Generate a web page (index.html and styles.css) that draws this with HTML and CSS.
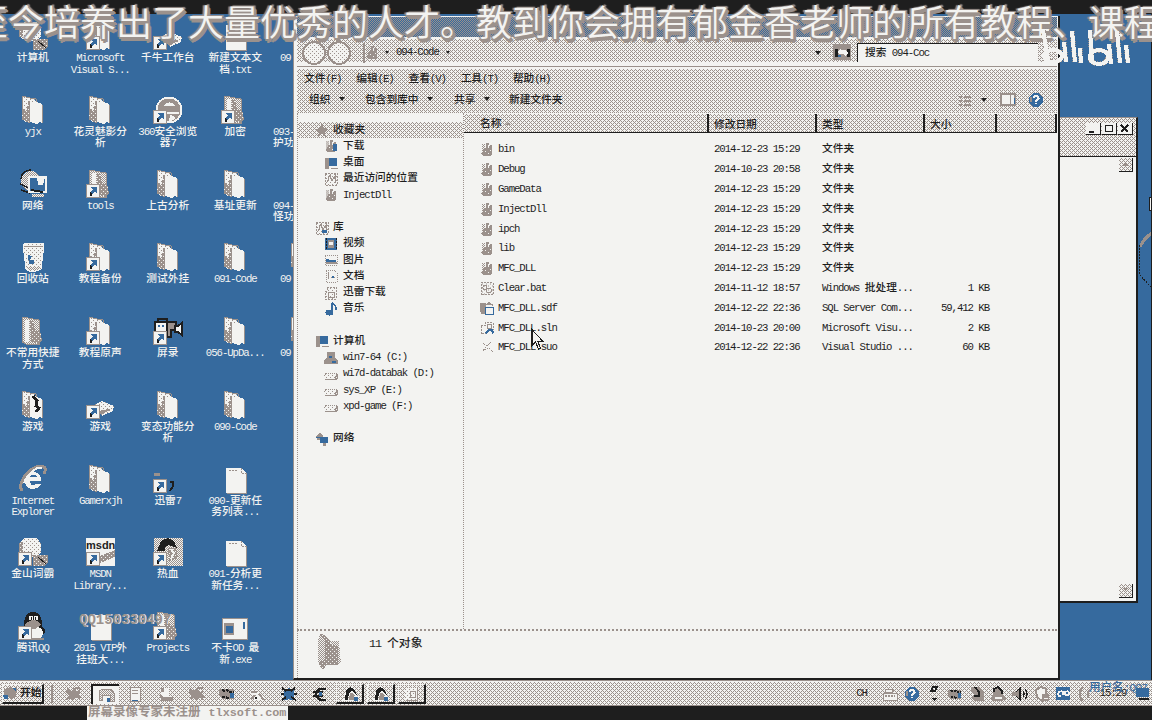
FILE: index.html
```html
<!DOCTYPE html>
<html lang="zh-CN">
<head>
<meta charset="utf-8">
<title>094-Code</title>
<link rel="stylesheet" href="styles.css">
</head>
<body>
<svg class="defs" aria-hidden="true">
<defs>
<pattern id="d" width="2" height="2" patternUnits="userSpaceOnUse"><rect width="2" height="2" fill="#f3f3f1"/><path d="M0 0h1v1H0zM1 1h1v1H1z" fill="#9b918c"/></pattern>
<pattern id="p" width="4" height="4" patternUnits="userSpaceOnUse"><rect width="4" height="4" fill="#f3f3f1"/><path d="M0 0h1v1H0zM2 2h1v1H2z" fill="#9b918c"/></pattern>
<pattern id="g" width="4" height="4" patternUnits="userSpaceOnUse"><rect width="4" height="4" fill="#9b918c"/><path d="M0 0h1v1H0zM2 2h1v1H2z" fill="#f3f3f1"/></pattern>
</defs>
<symbol id="arrow" viewBox="0 0 14 14"><path d="M.5.5h13v13H.5z" fill="#f3f3f1" stroke="#9b918c"/><path d="M5 3h6v6l-2-1-3 2v2H4V8l3-3-2-1z" fill="#366a9e"/><path d="M4 8v4h2V9z" fill="#1e1e1e"/></symbol>
<symbol id="folder" viewBox="0 0 30 30"><path d="M4 1l8 2h5v3l7 3v18H8l-4-3z" fill="url(#p)"/><path d="M4 25V1l8 2 6 1v3" fill="none" stroke="#9b918c"/><path d="M5 14l3 3 3-12 2 3v19l-2 1-7-4z" fill="url(#g)"/><path d="M12 7l9 1 3 3v17l-3-1-2 2-7-2z" fill="#f3f3f1"/><path d="M24 10v18" stroke="#9b918c"/></symbol>
<symbol id="folder2" viewBox="0 0 30 30"><path d="M4 1l17 3v24H8l-4-2z" fill="url(#d)" stroke="#9b918c"/><path d="M7 4h4v22H7z" fill="#f3f3f1"/><path d="M12 5h3l2 10h5l2 9-3 4-8-3z" fill="url(#g)"/></symbol>
<symbol id="doc" viewBox="0 0 30 30"><path d="M6 4h15l5 5v20H6z" fill="#f3f3f1"/><path d="M21 4v5h5v20M9 6h9" fill="none" stroke="#9b918c" stroke-dasharray="2 1"/><path d="M26 9v20H7" fill="none" stroke="#9b918c"/></symbol>
<symbol id="net" viewBox="0 0 30 30"><circle cx="13" cy="12" r="10" fill="url(#d)"/><path d="M3 10c0-5 4-9 10-9M2 15l9 4M3 21l9 3" stroke="#1e1e1e" stroke-width="1.5" fill="none"/><path d="M11 8h17v15H11z" fill="#366a9e" stroke="#f3f3f1" stroke-width="2"/><path d="M19 8h8l-2 8h-5z" fill="#f3f3f1"/><path d="M13 21l12 2" stroke="#1e1e1e" stroke-width="2"/><path d="M14 25h12v3H14z" fill="url(#d)"/></symbol>
<symbol id="bin" viewBox="0 0 30 30"><path d="M5 3l3-2h17l1 2-3 24-5 2h-7l-3-2z" fill="url(#p)" stroke="#f3f3f1"/><path d="M6 4h19" stroke="#9b918c"/><path d="M10 13l4 1-2 4h4v4h-5z" fill="#366a9e"/><path d="M9 25h13l-2 3h-9z" fill="url(#d)"/></symbol>
<symbol id="globe" viewBox="0 0 30 30"><circle cx="16" cy="15" r="12.5" fill="#9b918c" stroke="#f3f3f1" stroke-width="2"/><path d="M10 11c4-5 9-5 13 0zM5 17h21v2H5zM17 20c3 0 7 3 4 5l-5 1z" fill="#f3f3f1"/></symbol>
<symbol id="ie" viewBox="0 0 30 30"><path d="M8 17h15c2-12-17-12-16 1 1 9 12 9 16 2h-5c-3 3-6 1-6-3M12 13c1-3 6-3 7 0z" fill="#f3f3f1" fill-rule="evenodd"/><path d="M4 27C-2 18 15-2 26 3c2 1 1 5 0 7" fill="none" stroke="#9b918c" stroke-width="3"/><path d="M6 19C9 10 19 2 24 4" fill="none" stroke="#f3f3f1" stroke-width="2"/></symbol>
<symbol id="camera" viewBox="0 0 30 30"><path d="M5 6V3h9v3" fill="none" stroke="#1e1e1e" stroke-width="2"/><path d="M13 6h10v8h-5v7h-5z" fill="#9b918c" stroke="#1e1e1e" stroke-width="2"/><path d="M22 10h3l4-3v12l-4-3h-3z" fill="#f3f3f1" stroke="#1e1e1e" stroke-width="2"/><path d="M2 6h12v14H2z" fill="#f3f3f1" stroke="#1e1e1e" stroke-width="1.5"/><path d="M5 9h2v2H5zM9 9h2v2H9z" fill="#366a9e"/></symbol>
<symbol id="penguin" viewBox="0 0 30 30"><ellipse cx="15" cy="20" rx="12" ry="7" fill="#1e1e1e"/><ellipse cx="15" cy="12" rx="9" ry="11" fill="#1e1e1e"/><ellipse cx="16" cy="22" rx="9" ry="7" fill="#f3f3f1"/><path d="M10 11q5-4 11 0l2 3-6 4H11l-5-4z" fill="#9b918c"/><circle cx="13" cy="7" r="2.5" fill="#f3f3f1"/><circle cx="18" cy="7" r="2.5" fill="#f3f3f1"/><path d="M13 6v3m4-3v3" stroke="#1e1e1e"/><path d="M7 27h19v2H7z" fill="#9b918c"/></symbol>
<symbol id="user" viewBox="0 0 20 18"><path d="M3 16l3-10 4-4 4 1 3 7v6z" fill="url(#p)"/><path d="M5 15l1-9q3-6 8-2l3 6-5-4-3 2-1 7z" fill="#1e1e1e"/><path d="M10 8l4 1 1 6H9z" fill="#9b918c"/><path d="M14 12h4v4h-4z" fill="#366a9e"/></symbol>
<symbol id="ball" viewBox="0 0 30 30"><path d="M6 1h13l4 6v9l-5 4H8l-7-5 1-9z" fill="url(#p)"/><path d="M1 6l4-2v10l-2 2H1z" fill="url(#g)"/><path d="M15 18h15v8l-4 3H15z" fill="url(#g)"/><path d="M20 20l8 7" stroke="#1e1e1e"/></symbol>
<symbol id="hot" viewBox="0 0 30 30"><path d="M1 1h29v28H1z" fill="url(#d)"/><path d="M4 14L8 4l7-3 6 3 3 7-8-3-4 2v4z" fill="#1e1e1e"/><path d="M15 11h8l2 10-9 3z" fill="url(#g)"/><path d="M18 12l3 4-3 6" stroke="#f3f3f1" fill="none" stroke-width="2"/></symbol>
<symbol id="exe" viewBox="0 0 30 30"><path d="M2 7h25v21H2z" fill="#f3f3f1" stroke="#9b918c"/><path d="M4 12h10v12H4z" fill="#9b918c"/><path d="M6 15h7v7H6z" fill="#366a9e"/><path d="M24 11v7" stroke="#366a9e" stroke-width="2"/></symbol>
<symbol id="hat" viewBox="0 0 30 30"><path d="M9 15l8-4 12 5-1 5-11 5z" fill="url(#p)"/><path d="M14 21l14-3-12 7z" fill="#9b918c"/></symbol>
<symbol id="sf" viewBox="0 0 14 15"><path d="M2 2h3v11H2z" fill="url(#d)"/><path d="M4 6h2V1h3v5l1-3h2v10l-3 1H3l-2-2 2-3z" fill="#9b918c"/><path d="M8 3h1v3H8zM5 9h1v1H5zM8 11h1v1H8zM10 8h1v1h-1z" fill="#f3f3f1"/></symbol>
<symbol id="lines" viewBox="0 0 14 14"><path d="M1 1h12v12H1z" fill="url(#p)" stroke="#9b918c" stroke-dasharray="2 1"/><path d="M3 10l3-7 2 6 3-5v7" fill="none" stroke="#9b918c"/></symbol>
<symbol id="pc" viewBox="0 0 14 14"><path d="M3 2h10v8H3z" fill="#366a9e"/><path d="M1 2h3v10H1zM7 12h7" fill="#9b918c" stroke="#9b918c"/></symbol>
<symbol id="video" viewBox="0 0 14 14"><path d="M1 1h12v12H1z" fill="#366a9e"/><path d="M4 3h6v8H4z" fill="#9b918c"/><path d="M2 1v12M12 1v12" stroke="#1e1e1e" stroke-dasharray="2 1"/><path d="M5 5h4v3H5z" fill="#f3f3f1"/></symbol>
<symbol id="pic" viewBox="0 0 14 14"><path d="M1 2h12v10H1z" fill="#f3f3f1" stroke="#9b918c" stroke-dasharray="1 1"/><path d="M2 6l5 1h5v4H2z" fill="#366a9e"/><path d="M2 10h11" stroke="#9b918c" stroke-width="2"/></symbol>
<symbol id="note" viewBox="0 0 14 14"><path d="M8 1v9M8 1q5 3 4 7" fill="none" stroke="#366a9e" stroke-width="1.5"/><ellipse cx="5.5" cy="10.5" rx="4" ry="3" fill="#366a9e"/></symbol>
<symbol id="drive" viewBox="0 0 14 14"><path d="M0 9l2-3h9l3 2v3l-2 2H1l-1-1z" fill="url(#p)"/><path d="M0 9l2-3h9l3 2" stroke="#9b918c" fill="none" stroke-dasharray="1 1"/><path d="M1 12.5h10l3-2V8l-3 2" stroke="#9b918c" stroke-width="1.5" fill="none"/></symbol>
<symbol id="cdrive" viewBox="0 0 14 14"><path d="M3 1h8v6l3 2v4H0V9l3-2z" fill="#9b918c"/><path d="M5 5h3v2H5zM8 10h4v2H8z" fill="#366a9e"/></symbol>
<symbol id="star" viewBox="0 0 14 14"><path d="M7 0l2 5 5 1-4 3 1 5-4-3-4 3 1-5-4-3 5-1z" fill="#9b918c"/></symbol>
<symbol id="chip" viewBox="0 0 20 16"><path d="M2 3h15v10H5l-3-3z" fill="#9b918c"/><path d="M5 4l3 1 2-1 3 2h4M5 11h4l3 2" stroke="#1e1e1e" stroke-width="2" fill="none" stroke-dasharray="3 1"/><path d="M13 7h4v5h-4z" fill="#366a9e"/></symbol>
<symbol id="bug" viewBox="0 0 20 18"><path d="M3 3l5 3 2-4 3 5 4-3-2 6 3 3-6-1-3 4-2-3-5 2 3-5-3-2z" fill="#9b918c"/><path d="M11 3h5M12 11l4 3" stroke="#9b918c" stroke-width="2"/></symbol>
<symbol id="q" viewBox="0 0 16 16"><path d="M5 0h6l5 5v6l-5 5H5l-5-5V5z" fill="#366a9e"/><path d="M5 6q0-3 3-3t3 3l-3 3v1m0 1v2" stroke="#f3f3f1" stroke-width="2" fill="none"/><path d="M2 5v5" stroke="#9b918c" stroke-width="2"/></symbol>
</svg>

<main class="desktop">
<section class="icons">
<div class="ic"><svg><use href="#ball"/></svg><span>计算机</span></div>
<div class="ic"><svg><use href="#folder"/></svg><svg class="sc"><use href="#arrow"/></svg><span>Microsoft<br>Visual S...</span></div>
<div class="ic"><svg><use href="#hat"/></svg><svg class="sc"><use href="#arrow"/></svg><span>千牛工作台</span></div>
<div class="ic"><svg><use href="#doc"/></svg><span>新建文本文<br>档.txt</span></div>
<div class="ic cut"><i></i><span class="in">09</span></div>

<div class="ic"><svg><use href="#folder"/></svg><span>yjx</span></div>
<div class="ic"><svg><use href="#folder"/></svg><span>花灵魅影分<br>析</span></div>
<div class="ic"><svg><use href="#globe"/></svg><svg class="sc"><use href="#arrow"/></svg><span>360安全浏览<br>器7</span></div>
<div class="ic"><svg><use href="#folder2"/></svg><svg class="sc"><use href="#arrow"/></svg><span>加密</span></div>
<div class="ic cut"><i></i><span>093-<br>护功</span></div>

<div class="ic"><svg><use href="#net"/></svg><span>网络</span></div>
<div class="ic"><svg><use href="#folder2"/></svg><svg class="sc"><use href="#arrow"/></svg><span>tools</span></div>
<div class="ic"><svg><use href="#folder"/></svg><span>上古分析</span></div>
<div class="ic"><svg><use href="#folder"/></svg><span>基址更新</span></div>
<div class="ic cut"><i></i><span>094-<br>怪功</span></div>

<div class="ic"><svg><use href="#bin"/></svg><span>回收站</span></div>
<div class="ic"><svg><use href="#folder"/></svg><svg class="sc"><use href="#arrow"/></svg><span>教程备份</span></div>
<div class="ic"><svg><use href="#folder"/></svg><span>测试外挂</span></div>
<div class="ic"><svg><use href="#folder"/></svg><span>091-Code</span></div>
<div class="ic cut"><svg><use href="#folder"/></svg><span class="in">09</span></div>

<div class="ic"><svg><use href="#folder2"/></svg><span>不常用快捷<br>方式</span></div>
<div class="ic"><svg><use href="#folder"/></svg><svg class="sc"><use href="#arrow"/></svg><span>教程原声</span></div>
<div class="ic"><svg><use href="#camera"/></svg><svg class="sc"><use href="#arrow"/></svg><span>屏录</span></div>
<div class="ic"><svg><use href="#folder"/></svg><span>056-UpDa...</span></div>
<div class="ic cut"><svg><use href="#folder"/></svg><span class="in">09</span></div>

<div class="ic"><svg><use href="#folder"/><path d="M15 6l4 5-1 5 3 2-3 4" fill="none" stroke="#1e1e1e" stroke-width="3"/></svg><span>游戏</span></div>
<div class="ic"><svg><use href="#hat"/></svg><svg class="sc"><use href="#arrow"/></svg><span>游戏</span></div>
<div class="ic"><svg><use href="#folder"/></svg><span>变态功能分<br>析</span></div>
<div class="ic"><svg><use href="#folder"/></svg><span>090-Code</span></div>
<div class="ic"></div>

<div class="ic"><svg><use href="#ie"/></svg><span>Internet<br>Explorer</span></div>
<div class="ic"><svg><use href="#folder"/></svg><span>Gamerxjh</span></div>
<div class="ic"><svg><path d="M1 10h6" stroke="#9b918c" stroke-width="3"/><path d="M17 18h3v4l-3 5" fill="none" stroke="#1e1e1e" stroke-width="2"/></svg><svg class="sc"><use href="#arrow"/></svg><span>迅雷7</span></div>
<div class="ic"><svg><use href="#doc"/></svg><span>090-更新任<br>务列表...</span></div>
<div class="ic"></div>

<div class="ic"><svg><use href="#ball"/></svg><svg class="sc"><use href="#arrow"/></svg><span>金山词霸</span></div>
<div class="ic"><svg><path d="M1 1h29v28H1z" fill="#f3f3f1"/><path d="M15 19l15-6v7l-15 6z" fill="url(#g)"/><text x="1" y="12" class="msdn">msdn</text></svg><svg class="sc"><use href="#arrow"/></svg><span>MSDN<br>Library...</span></div>
<div class="ic"><svg><use href="#hot"/></svg><svg class="sc"><use href="#arrow"/></svg><span>热血</span></div>
<div class="ic"><svg><use href="#doc"/></svg><span>091-分析更<br>新任务...</span></div>
<div class="ic"></div>

<div class="ic"><svg><use href="#penguin"/></svg><svg class="sc"><use href="#arrow"/></svg><span>腾讯QQ</span></div>
<div class="ic"><svg><use href="#doc"/></svg><span>2015 VIP外<br>挂班大...</span></div>
<div class="ic"><svg><use href="#folder2"/></svg><svg class="sc"><use href="#arrow"/></svg><span>Projects</span></div>
<div class="ic"><svg><use href="#exe"/></svg><span>不卡OD 最<br>新.exe</span></div>
<div class="ic"></div>
</section>

<svg class="gadget" viewBox="0 0 14 110"><path d="M14 35Q5 42 2 56T14 92" fill="#366a9e"/><path d="M14 38Q6 43 2 52" fill="none" stroke="#9b918c" stroke-width="3"/><path d="M1 50v29l12 13" fill="none" stroke="#1e1e1e" stroke-dasharray="2 1"/><path d="M11 2h5v13h-5z" fill="#f3f3f1" stroke="#1e1e1e"/></svg>

<section class="backwin">
<header><b><svg viewBox="0 0 14 12"><path d="M3 9h5" stroke="#1e1e1e" stroke-width="2"/></svg></b><b><svg viewBox="0 0 14 12"><path d="M3.5 2.5h7v6h-7z" fill="none" stroke="#1e1e1e" stroke-width="1.5"/></svg></b><b><svg viewBox="0 0 14 12"><path d="M3 2l7 7M10 2L3 9" stroke="#1e1e1e" stroke-width="1.5"/></svg></b></header>
<div class="backbody"><b><svg viewBox="0 0 14 14"><path d="M3 9l4-4 4 4z" fill="#9b918c"/></svg></b><b><svg viewBox="0 0 14 14"><path d="M3 4l4 4 4-4z" fill="#9b918c"/></svg></b></div>
</section>

<section class="explorer">
<div class="title"></div>
<div class="addr">
<svg class="nav" viewBox="0 0 54 27"><circle cx="14" cy="14" r="11" fill="url(#p)" stroke="#9b918c" stroke-width="2"/><circle cx="39" cy="14" r="11" fill="url(#p)" stroke="#9b918c" stroke-width="2"/></svg>
<div class="path"><svg class="s14"><use href="#sf"/></svg><i class="tri"></i><span>094-Code</span><i class="tri"></i><i class="tri end"></i></div>
<svg class="go" viewBox="0 0 18 17"><path d="M0 0h18v16H0z" fill="#9b918c"/><path d="M2 5h3v8H2zM14 5h3v8h-3z" fill="#1e1e1e"/><path d="M5 7l3-3v2h4l3 3-3 3-2-2H6z" fill="#f3f3f1"/><path d="M5 11h3v2H5z" fill="#366a9e"/></svg>
<div class="search">搜索 094-Coc</div>
</div>
<nav class="menu"><span>文件(F)</span><span>编辑(E)</span><span>查看(V)</span><span>工具(T)</span><span>帮助(H)</span></nav>
<div class="tools"><span class="t1">组织<i class="tri"></i></span><span class="t2">包含到库中<i class="tri"></i></span><span class="t3">共享<i class="tri"></i></span><span>新建文件夹</span>
<div class="right"><svg class="s14" viewBox="0 0 14 14"><path d="M1 3h3m2 0h7M1 7h3m2 0h7M1 11h3m2 0h7" stroke="#9b918c" stroke-width="2"/></svg><i class="tri"></i><svg class="pane" viewBox="0 0 16 14"><path d="M1 1h14v11H1z" fill="#f3f3f1" stroke="#9b918c" stroke-width="1.5"/><path d="M10 2v10" stroke="#9b918c"/><path d="M14 5v6" stroke="#366a9e"/></svg><svg class="s14"><use href="#q" width="14" height="14"/></svg></div></div>
<div class="body">
<aside>
<div class="h fav"><svg><use href="#star"/></svg>收藏夹</div>
<div><svg><use href="#sf"/><path d="M9 5h4v7H9z" fill="#366a9e"/></svg>下载</div>
<div><svg><use href="#pc"/></svg>桌面</div>
<div><svg><use href="#lines"/></svg>最近访问的位置</div>
<div><svg><use href="#sf"/></svg>InjectDll</div>
<div></div>
<div class="h"><svg><use href="#lines"/><path d="M7 10h5" stroke="#366a9e" stroke-width="3"/></svg>库</div>
<div><svg><use href="#video"/></svg>视频</div>
<div><svg><use href="#pic"/></svg>图片</div>
<div><svg viewBox="0 0 14 14"><path d="M2 1h8l3 3v9H2z" fill="#f3f3f1" stroke="#9b918c" stroke-dasharray="1 1"/><path d="M4 3v7M7 8h4" stroke="#9b918c"/><path d="M8 7h2v2H8z" fill="#366a9e"/></svg>文档</div>
<div><svg viewBox="0 0 14 14"><path d="M1 5h2V1h9v12H1z" fill="url(#p)" stroke="#9b918c" stroke-dasharray="2 1"/><path d="M4 6h6v5H4z" fill="none" stroke="#9b918c"/></svg>迅雷下载</div>
<div><svg><use href="#note"/></svg>音乐</div>
<div></div>
<div class="h"><svg><use href="#pc"/></svg>计算机</div>
<div><svg><use href="#cdrive"/></svg>win7-64 (C:)</div>
<div><svg><use href="#drive"/></svg>wi7d-databak (D:)</div>
<div><svg><use href="#drive"/></svg>sys_XP (E:)</div>
<div><svg><use href="#drive"/></svg>xpd-game (F:)</div>
<div></div>
<div class="h"><svg viewBox="0 0 14 14"><path d="M1 4l4-3 3 3-2 4H2z" fill="#9b918c"/><path d="M5 5h8v6H5z" fill="#366a9e"/><path d="M9 11v3" stroke="#9b918c" stroke-width="3"/><path d="M1 5h4v2" stroke="#366a9e" fill="none"/></svg>网络</div>
</aside>
<div class="list">
<div class="row head"><span>名称 <i class="up"></i></span><span>修改日期</span><span>类型</span><span>大小</span><span></span></div>
<div class="rows">
<div class="row"><span><svg><use href="#sf"/></svg>bin</span><span>2014-12-23 15:29</span><span>文件夹</span><span></span></div>
<div class="row"><span><svg><use href="#sf"/></svg>Debug</span><span>2014-10-23 20:58</span><span>文件夹</span><span></span></div>
<div class="row"><span><svg><use href="#sf"/></svg>GameData</span><span>2014-12-23 15:29</span><span>文件夹</span><span></span></div>
<div class="row"><span><svg><use href="#sf"/></svg>InjectDll</span><span>2014-12-23 15:29</span><span>文件夹</span><span></span></div>
<div class="row"><span><svg><use href="#sf"/></svg>ipch</span><span>2014-12-23 15:29</span><span>文件夹</span><span></span></div>
<div class="row"><span><svg><use href="#sf"/></svg>lib</span><span>2014-12-23 15:29</span><span>文件夹</span><span></span></div>
<div class="row"><span><svg><use href="#sf"/></svg>MFC_DLL</span><span>2014-12-23 15:29</span><span>文件夹</span><span></span></div>
<div class="row"><span><svg viewBox="0 0 14 14"><path d="M1 1h12v12H1z" fill="url(#p)" stroke="#9b918c" stroke-dasharray="2 1"/><circle cx="5" cy="6" r="2" fill="none" stroke="#9b918c"/><circle cx="9" cy="9" r="2.5" fill="none" stroke="#9b918c"/></svg>Clear.bat</span><span>2014-11-12 18:57</span><span>Windows 批处理...</span><span>1 KB</span></div>
<div class="row"><span><svg viewBox="0 0 14 14"><path d="M0 2h5v10H2L0 9zM6 3l3-2 4 3" fill="#9b918c" stroke="#9b918c"/><path d="M5.5 5.5h8v7h-8z" fill="#f3f3f1" stroke="#366a9e"/></svg>MFC_DLL.sdf</span><span>2014-12-22 22:36</span><span>SQL Server Com...</span><span>59,412 KB</span></div>
<div class="row"><span><svg viewBox="0 0 14 14"><path d="M1 4h4V1h8v7M1 4v8h6" fill="none" stroke="#9b918c" stroke-dasharray="2 1"/><path d="M7 3h4v4H7z" fill="none" stroke="#9b918c"/><path d="M6 12l3-4h3l1 4" fill="none" stroke="#366a9e" stroke-width="2"/></svg>MFC_DLL.sln</span><span>2014-10-23 20:00</span><span>Microsoft Visu...</span><span>2 KB</span></div>
<div class="row"><span><svg viewBox="0 0 14 14"><path d="M3 3l4 2-4 5 6-3 4 5M8 4l3-2" fill="none" stroke="#9b918c" stroke-dasharray="2 1"/></svg>MFC_DLL.suo</span><span>2014-12-22 22:36</span><span>Visual Studio ...</span><span>60 KB</span></div>
</div>
</div>
</div>
<footer><svg viewBox="0 0 26 38"><path d="M4 1l6 2 5 5h8l2 22-3 2H10l-2 5-6-8V7z" fill="url(#d)"/><path d="M4 1l5 1 7 10 6 2v18H10l-3 5-5-7 7-3V7z" fill="url(#g)"/></svg><span>11 个对象</span></footer>
</section>

<svg class="cursor" viewBox="0 0 14 24"><path d="M1.5 1v17l4-4 3 7 2-1-3-7h5z" fill="#f3f3f1" stroke="#1e1e1e"/><path d="M1.5 1v17" stroke="#1e1e1e" stroke-width="2"/></svg>
<div class="qqmark">QQ150330497</div>
</main>

<footer class="taskbar">
<button class="start"><svg viewBox="0 0 16 16"><path d="M1 4l6-2 2 2 5-2-1 10-5 2-3-2-4 2z" fill="#9b918c"/><path d="M0 10h5v4H1zM9 3h4v3" fill="#366a9e"/></svg>开始</button>
<i class="sep"></i>
<div class="tasks">
<b><svg><use href="#bug"/></svg></b>
<b class="press"><svg viewBox="0 0 20 18"><path d="M3 5l4-2h8l3 4v8h-4V9H6v5H3z" fill="url(#d)" stroke="#9b918c"/><path d="M11 12h3v4h-3z" fill="#366a9e"/></svg></b>
<b><svg viewBox="0 0 20 18"><path d="M5 2h10v14H5z" fill="#f3f3f1" stroke="#9b918c"/><path d="M7 5h6M7 8h6" stroke="#9b918c"/><path d="M7 15h6" stroke="#366a9e"/></svg></b>
<b><svg viewBox="0 0 20 18"><path d="M5 3h8v9H5z" fill="#f3f3f1"/><path d="M4 9l3 3h10v4H5zM5 3h3v4H5z" fill="#9b918c"/></svg></b>
<b><svg><use href="#bug"/></svg></b>
<b><svg><use href="#chip"/></svg></b>
<b><svg viewBox="0 0 20 18"><path d="M2 6h7l3 5h4v4H7z" fill="#f3f3f1"/><path d="M3 7h6M4 14l3-4M11 9l5 6" stroke="#9b918c" stroke-width="2"/><path d="M7 12h2v2H7z" fill="#1e1e1e"/></svg></b>
<b><svg viewBox="0 0 20 18"><path d="M5 4h3l2-1 2 1h3v3l1 2-1 2v4h-3l-2-1-3 1H5v-4L4 9l1-2z" fill="#366a9e"/><path d="M3 3l4 3M16 3l-4 3M3 15l4-3M17 15l-5-3M2 9h3M15 9h3M7 5h5" stroke="#1e1e1e" stroke-width="2"/></svg></b>
<b><svg viewBox="0 0 20 18"><path d="M16 4h-5q-5 1-5 5t5 6h5M3 7h10M3 11h10" fill="none" stroke="#1e1e1e" stroke-width="2.5"/><path d="M9 7h3v4H9z" fill="#366a9e"/></svg></b>
<b class="raise"><svg><use href="#user"/></svg></b>
<b class="raise"><svg><use href="#user"/></svg></b>
<b class="raise"><svg viewBox="0 0 20 18"><path d="M4 3h13v12H4z" fill="url(#p)"/><path d="M16 3v12H5M9 6h5v6H9z" fill="none" stroke="#9b918c"/></svg></b>
</div>
<div class="tray">
<span class="ch">CH</span>
<svg viewBox="0 0 18 18"><path d="M5 4h8l-2 3H4zM2 8h14v7H2z" fill="#f3f3f1" stroke="#9b918c"/><path d="M4 11h10" stroke="#9b918c" stroke-width="2" stroke-dasharray="2 1"/></svg>
<svg><use href="#q" x="2" y="2" width="14" height="14"/></svg>
<svg viewBox="0 0 18 18"><path d="M8 2h4l-2 4H6z" fill="none" stroke="#1e1e1e" stroke-width="1.5"/><path d="M6 13h6l-3 3z" fill="#1e1e1e"/></svg>
<svg><use href="#chip" width="18" height="18"/></svg>
<svg viewBox="0 0 18 18"><path d="M4 2h7l5 5v9H7l-5-4 6-2-6-4z" fill="#9b918c"/><path d="M7 2l4 5v4H6" stroke="#1e1e1e" stroke-width="2" fill="none"/></svg>
<svg viewBox="0 0 18 18"><path d="M4 9V5l4-3h3l3 4v5l3 3-4 2H4l-2-3z" fill="#9b918c"/><path d="M5 7V4l4-2 4 4v3" stroke="#1e1e1e" stroke-width="2" fill="none"/><path d="M6 12h7v2H6z" fill="#f3f3f1"/></svg>
<svg viewBox="0 0 18 18"><path d="M1 7h4l5-5v14l-5-5H1z" fill="#9b918c"/><path d="M5 7l4-4v12l-4-4M12 6q2 3 0 6M14 4q4 5 0 10" stroke="#1e1e1e" stroke-width="1.2" fill="none"/></svg>
<svg viewBox="0 0 18 18"><path d="M3 5l5-3 5 2v8l-4 4-5-4z" fill="#f3f3f1" stroke="#9b918c" stroke-width="2"/><path d="M9 9h7v7H9z" fill="#9b918c"/><path d="M11 13h4" stroke="#f3f3f1"/></svg>
<svg viewBox="0 0 18 18"><path d="M2 2h14v13H2z" fill="#366a9e"/><path d="M7 11H5q-2-2 0-4 3-2 5 1l2 2q3 1 3-2-1-3-4-1l-3 3" stroke="#f3f3f1" stroke-width="1.6" fill="none"/></svg>
<svg viewBox="0 0 18 18"><path d="M7 2q-7 7 0 14M13 5q-3 4 0 8" stroke="#9b918c" stroke-width="2" fill="none"/></svg>
<span class="time">15:29</span>
<svg viewBox="0 0 18 18"><path d="M4 3h13v9H4z" fill="#366a9e"/><path d="M7 14h10" stroke="#1e1e1e" stroke-width="2"/></svg>
</div>
<div class="user">用户名:QQ7</div>
</footer>

<div class="bottom"><span>屏幕录像专家未注册<em>tlxsoft.com</em></span></div>
<div class="marquee">至今培养出了大量优秀的人才。教到你会拥有郁金香老师的所有教程、课程</div>
<svg class="bili" viewBox="0 0 92 46"><defs><g id="bl" fill="none"><path d="M3 6l5 30"/><ellipse cx="13" cy="32" rx="9" ry="6"/><path d="M24 18l2 20M32 7l3 31M40 24l1 15M50 6l2 33"/><ellipse cx="59" cy="33" rx="9" ry="7"/><path d="M69 20l2 20M77 7l3 32M86 21l2 18"/></g></defs><use href="#bl" stroke="#9b918c" stroke-width="5" stroke-dasharray="1 1"/><use href="#bl" stroke="#f3f3f1" stroke-width="4"/></svg>
<script src="text.js"></script>
</body>
</html>
```
FILE: styles.css
```css
:root {
  --ink: #1e1e1e;
  --light: #f3f3f1;
  --gray: #9b918c;
  --blue: #366a9e;
  --dither: #f3f3f1 url("data:image/svg+xml,%3Csvg xmlns='http://www.w3.org/2000/svg' width='4' height='4' shape-rendering='crispEdges'%3E%3Cpath d='M2 0h1v1h-1zM1 1h1v1h-1zM3 1h1v1h-1zM0 2h1v1h-1zM1 3h1v1h-1zM3 3h1v1h-1z' fill='%239b918c'/%3E%3C/svg%3E") 0 0 / 4px 4px;
  --caption: #366a9e url("data:image/svg+xml,%3Csvg xmlns='http://www.w3.org/2000/svg' width='2' height='2' shape-rendering='crispEdges'%3E%3Cpath d='M0 0h1v1h-1zM1 1h1v1h-1z' fill='%239b918c'/%3E%3C/svg%3E") 0 0 / 2px 2px;
}
* { box-sizing: border-box; }
body {
  margin: 0; width: 1152px; height: 720px; overflow: hidden; position: relative;
  display: flex; flex-direction: column;
  background: var(--ink); color: var(--ink);
  font: 500 10.7px/11px "Liberation Mono", "Noto Sans CJK SC", monospace;
  white-space: nowrap;
}
.lat { letter-spacing: -1.07px; white-space: pre; }
svg { display: block; flex: none; shape-rendering: crispEdges; }
.defs { position: absolute; width: 0; height: 0; }
i { font-style: normal; }

.desktop { height: 666px; margin-top: 14px; flex: none; position: relative; background: var(--blue); overflow: hidden; border-right: 1px solid var(--ink); }
.icons { display: grid; grid-template-columns: repeat(5, 67.5px); grid-auto-rows: 73.75px; margin-left: -1px; padding-top: 7px; color: var(--light); }
.ic { display: flex; flex-direction: column; align-items: center; position: relative; text-align: center; }
.ic svg { width: 30px; height: 30px; }
.ic i { height: 30px; }
.ic > span { margin-top: 2px; line-height: 11.5px; }
.ic .sc { position: absolute; left: 19px; top: 15px; width: 14px; height: 14px; }
.ic.cut { align-items: flex-start; text-align: left; padding-left: 4px; }
.ic.cut svg { margin-left: 14px; }
.ic.cut .in { padding-left: 7px; }
.msdn { font: bold 11px "Liberation Sans", sans-serif; fill: var(--ink); }

.gadget { position: absolute; left: 1138px; top: 181px; width: 14px; height: 110px; }
.backwin { position: absolute; left: 1050px; top: 103px; width: 88px; height: 486px; display: flex; flex-direction: column; background: var(--light); border: 1px solid var(--gray); border-right: 2px solid var(--ink); border-bottom: 2px solid var(--ink); }
.backwin header { height: 39px; background: var(--dither); border-bottom: 1px solid var(--ink); display: flex; justify-content: flex-end; gap: 1px; padding: 5px 3px; }
.backwin header b { width: 15px; height: 12px; background: var(--light); border-right: 1px solid var(--ink); border-bottom: 1px solid var(--ink); }
.backbody { flex: 1; display: flex; flex-direction: column; align-items: flex-end; justify-content: space-between; padding: 1px 3px 3px; }
.backbody b { width: 14px; height: 14px; background: var(--dither); border-right: 1px solid var(--ink); border-bottom: 1px solid var(--ink); }

.explorer { position: absolute; left: 293px; top: 2px; width: 767px; height: 664px; display: flex; flex-direction: column; background: var(--light); border-left: 1px solid var(--gray); border-right: 2px solid var(--ink); border-bottom: 2px solid var(--ink); padding: 0 1px 0 3px; }
.title { height: 23px; background: var(--caption); border-top: 1px solid var(--light); border-bottom: 2px solid var(--light); }
.addr { height: 28px; display: flex; align-items: center; background: var(--dither); border-bottom: 1px solid var(--gray); box-shadow: inset 0 -4px var(--light); }
.nav { width: 54px; height: 27px; margin-left: 3px; }
.path { width: 470px; height: 20px; display: flex; align-items: center; margin-left: 9px; border-left: 2px solid var(--gray); gap: 7px; }
.s14 { width: 14px; height: 15px; }
.path .s14 { margin-right: -1px; }
.tri { display: inline-block; width: 0; height: 0; border: 3px solid transparent; border-top: 4px solid var(--ink); border-bottom: 0; }
.path .tri { border-width: 3px 2.5px 0; }
.path .tri.end { margin-left: auto; margin-right: 12px; border-width: 4px 3px 0; }
.go { width: 18px; height: 17px; }
.search { width: 181px; height: 19px; margin-left: 6px; background: var(--light); border-left: 1px solid var(--ink); border-top: 1px solid var(--ink); padding: 4px 7px; }
.menu { height: 22px; background: var(--dither); border-top: 2px solid var(--light); display: flex; align-items: center; padding-left: 7px; gap: 14.8px; }
.tools { height: 24px; background: var(--dither); display: flex; align-items: center; padding: 0 0 2px 12px; }
.tools span .tri { margin-left: 9px; vertical-align: 2px; }
.t1 { width: 56px; }
.t2 { width: 89px; }
.t3 { width: 55px; }
.right { margin-left: auto; display: flex; align-items: center; gap: 13px; padding-right: 14px; }
.right .tri { margin-left: -4px; }
.pane { width: 16px; height: 14px; }
.body { flex: 1; min-height: 0; display: flex; }
aside { width: 167px; padding-top: 9px; border-right: 1px dotted var(--gray); border-left: 1px dotted var(--gray); }
aside div { height: 16.25px; display: flex; align-items: center; padding-left: 26px; gap: 5px; }
aside .h { padding-left: 17px; gap: 4px; }
aside svg { width: 14px; height: 14px; }
aside .fav { background: var(--dither); }
.list { flex: 1; }
.row { display: grid; grid-template-columns: 245px 108px 108px 72px 60px; align-items: center; height: 19.8px; }
.row > span { padding-left: 5px; }
.row > span:first-child { display: flex; align-items: center; gap: 4px; padding-left: 16px; }
.row:not(.head) > span:nth-child(4) { text-align: right; padding-right: 8px; margin-left: -20px; }
.row svg { width: 14px; height: 15px; }
.rows { padding-top: 7px; }
.head { height: 20px; background: var(--dither); border-bottom: 1px solid var(--ink); border-top: 1px solid var(--light); }
.head > span { height: 18px; line-height: 20px; padding-top: 1px; border-right: 2px solid var(--ink); }
.up { border: 3px solid transparent; border-bottom-color: var(--gray); border-top: 0; }
.explorer > footer { height: 49px; border-top: 2px dotted var(--gray); border-left: 1px dotted var(--gray); display: flex; padding: 2px 0 0 18px; gap: 27px; }
.explorer > footer svg { width: 26px; height: 38px; }
.explorer > footer span { font-size: 11.8px; }
.explorer > footer > span { padding-top: 6px; }
.cursor { position: absolute; left: 530px; top: 314px; width: 14px; height: 24px; }
.qqmark { position: absolute; left: 79px; top: 598px; color: var(--gray); font: bold 14px/16px "Liberation Mono", monospace; text-shadow: 1px 0 0 var(--light); }

.taskbar { height: 26px; flex: none; position: relative; background: var(--dither); border-top: 2px solid var(--light); border-bottom: 1px solid var(--gray); display: flex; align-items: center; padding-left: 2px; }
.taskbar::before { content: ""; position: absolute; inset: -2px 0 auto; height: 1px; background: var(--gray); }
.start { width: 42px; height: 20px; padding: 0; border: 1px solid var(--light); border-right: 2px solid var(--ink); border-bottom: 2px solid var(--ink); background: var(--dither); display: flex; align-items: center; gap: 1px; font: inherit; font-weight: bold; color: var(--ink); }
.start svg { width: 16px; height: 16px; }
.sep { width: 2px; height: 18px; background: var(--gray); margin-left: 7px; }
.tasks { display: flex; margin-left: 7px; gap: 2.7px; }
.tasks b { width: 28px; height: 20px; display: grid; place-items: center; }
.tasks svg { width: 20px; height: 18px; }
.press { background: var(--light); border-left: 2px solid var(--ink); border-top: 2px solid var(--ink); }
.raise { border: 1px solid var(--light); border-right: 2px solid var(--ink); border-bottom: 2px solid var(--ink); }
.tray { margin-left: auto; display: flex; align-items: center; gap: 3.6px; padding-right: 2px; }
.tray svg { width: 18px; height: 18px; }
.ch { margin-right: 11px; }
.time { width: 31px; text-align: center; }
.user { position: absolute; left: 1089px; top: 0; color: var(--blue); font-size: 11.5px; }

.bottom { height: 14px; display: flex; padding-left: 87px; }
.bottom span { display: flex; width: 201px; background: var(--light); color: var(--gray); font-size: 12.5px; line-height: 14px; font-weight: bold; gap: 8px; padding-left: 1px; }
.bottom em { font-style: normal; font-size: 11.8px; }
.marquee { position: absolute; left: -28px; top: 0; width: 1180px; height: 46px; overflow: hidden; color: var(--light); font: 350 36px/40px "Noto Sans CJK SC", sans-serif; text-shadow: 2px 2px 0 var(--gray), 3px 3px 0 var(--gray), -1px 2px 0 var(--gray), 1px 4px 0 var(--gray), -2px 0 1px var(--gray), 2px -1px 1px var(--gray); }
.bili { position: absolute; left: 1040px; top: 24px; width: 92px; height: 46px; }
```
FILE: text.js
```js
// Half-width characters take exactly half the width of a full-width one.
const walker = document.createTreeWalker(document.body, NodeFilter.SHOW_TEXT);
const nodes = [];
while (walker.nextNode()) {
  const parent = walker.currentNode.parentElement;
  if (parent.closest('svg, script, style, .marquee, .bottom, .qqmark')) continue;
  if (/[\x21-\x7e]/.test(walker.currentNode.data)) nodes.push(walker.currentNode);
}
for (const node of nodes) {
  const parts = node.data.split(/([\x20-\x7e]+)/).filter(Boolean);
  const wrap = document.createElement('span');
  for (const part of parts) {
    const piece = document.createElement('span');
    if (/^[\x20-\x7e]+$/.test(part)) piece.className = 'lat';
    piece.textContent = part;
    wrap.append(piece);
  }
  node.replaceWith(wrap);
}
```
